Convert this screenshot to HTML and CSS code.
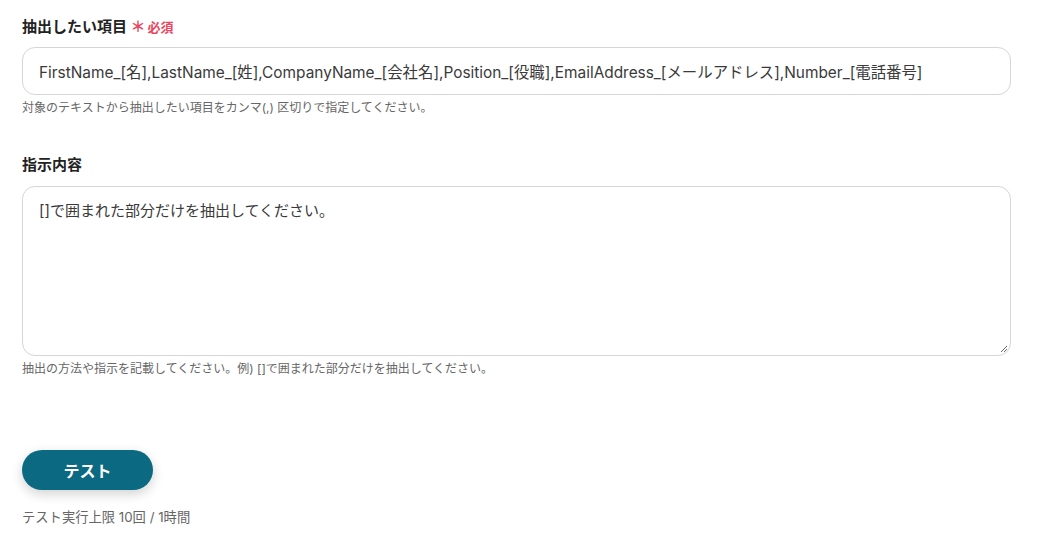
FILE: index.html
```html
<!DOCTYPE html>
<html lang="ja">
<head>
<meta charset="utf-8">
<link rel="stylesheet" href="styles.css">
</head>
<body>
<div class="form">
  <div class="field">
    <div class="label">抽出したい項目 <span class="req"><span class="star">＊</span>必須</span></div>
    <div class="input">FirstName_[名],LastName_[姓],CompanyName_[会社名],Position_[役職],EmailAddress_[メールアドレス],Number_[電話番号]</div>
    <div class="help">対象のテキストから抽出したい項目をカンマ(,) 区切りで指定してください。</div>
  </div>
  <div class="field field2">
    <div class="label">指示内容</div>
    <div class="textarea">[]で囲まれた部分だけを抽出してください。
      <svg class="grip" width="8" height="8" viewBox="0 0 8 8"><path d="M7 1L1 7M7 4L4 7" stroke="#6b6b6b" stroke-width="1"/></svg>
    </div>
    <div class="help">抽出の方法や指示を記載してください。例) []で囲まれた部分だけを抽出してください。</div>
  </div>
  <button class="btn">テスト</button>
  <div class="limit">テスト実行上限 10回 / 1時間</div>
</div>
</body>
</html>
```
FILE: styles.css
```css
html, body { margin: 0; padding: 0; background: #fff; }
body { font-family: Inter, "Noto Sans CJK JP", sans-serif; color: #333; }
.form { padding: 17px 27px 0 22px; width: 989px; }
.label { font-size: 15px; line-height: 20px; font-weight: 700; color: #222; margin-bottom: 10px; }
.req { color: #e8475f; font-weight: 600; font-size: 13px; }
.star { font-size: 15px; margin-right: 2px; }
.input { box-sizing: border-box; height: 48px; border: 1px solid #d4d6da; border-radius: 13px; padding: 0 16px; font-size: 15.4px; line-height: 50px; color: #3a3a3a; white-space: nowrap; overflow: hidden; }
.help { font-size: 12px; line-height: 16px; color: #666; margin-top: 5px; }
.field2 { margin-top: 39px; }
.field2 .label { margin-bottom: 11px; }
.textarea { position: relative; box-sizing: border-box; height: 170px; border: 1px solid #d4d6da; border-radius: 13px; padding: 12px 16px; font-size: 15px; line-height: 24px; color: #3a3a3a; }
.grip { position: absolute; right: 2px; bottom: 2px; }
.btn { display: block; margin-top: 73px; width: 131px; height: 40px; border: none; border-radius: 20px; background: #0b6a82; color: #fff; font-family: inherit; font-size: 16px; font-weight: 700; box-shadow: 0 4px 12px rgba(0,0,0,0.18); }
.limit { margin-top: 18px; font-size: 13.3px; line-height: 18px; color: #666; }
```
